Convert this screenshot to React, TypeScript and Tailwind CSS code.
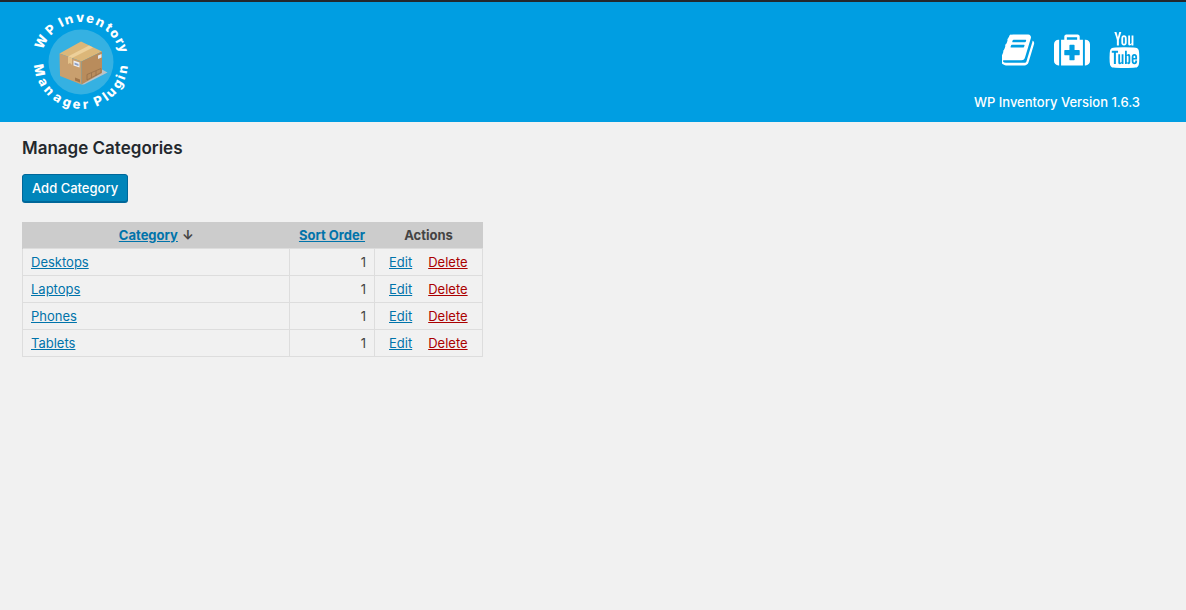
interface Category {
  name: string;
  sortOrder: number;
}

interface Glyph {
  char: string;
  angle: number;
}

const categories: Category[] = [
  { name: "Desktops", sortOrder: 1 },
  { name: "Laptops", sortOrder: 1 },
  { name: "Phones", sortOrder: 1 },
  { name: "Tablets", sortOrder: 1 },
];

// degrees clockwise from the top of the ring
const upperRing: Glyph[] = [
  { char: "W", angle: -63 },
  { char: "P", angle: -43 },
  { char: "I", angle: -27 },
  { char: "n", angle: -16 },
  { char: "v", angle: -1 },
  { char: "e", angle: 12 },
  { char: "n", angle: 26 },
  { char: "t", angle: 39 },
  { char: "o", angle: 50 },
  { char: "r", angle: 62 },
  { char: "y", angle: 72 },
];

// degrees clockwise from the bottom of the ring
const lowerRing: Glyph[] = [
  { char: "M", angle: 79 },
  { char: "a", angle: 62 },
  { char: "n", angle: 48 },
  { char: "a", angle: 33 },
  { char: "g", angle: 19 },
  { char: "e", angle: 6 },
  { char: "r", angle: -6 },
  { char: "P", angle: -24 },
  { char: "l", angle: -35 },
  { char: "u", angle: -45 },
  { char: "g", angle: -59 },
  { char: "i", angle: -69 },
  { char: "n", angle: -80 },
];

function Logo() {
  return (
    <svg
      viewBox="0 0 100 100"
      className="size-[100px] overflow-visible"
      role="img"
      aria-label="WP Inventory Manager Plugin"
    >
      <circle cx="50" cy="50" r="32.5" fill="#35b1e2" />
      <path d="M50 72.500L71 57.500 76.500 60.500 53 72.500z" fill="#b9c3c8" />
      <path d="M28.500 41.500L50 29.500 71 39.500 50.500 49.500z" fill="#dcb779" />
      <path d="M28.500 41.500L50.500 49.500V72.500L29 64z" fill="#c99f6e" />
      <path d="M50.500 49.500L71 39.500V61L50.500 72.500z" fill="#b98c5c" />
      <path d="M37 44.500L58 33.500 62 35.500 41 46z" fill="#edd09a" />
      <path d="M37 44.500L41 46V53L39 51 37 52z" fill="#e5c38b" />
      <path d="M42.500 48.500l6 2v5l-6-2z" fill="#eef0f4" />
      <path d="M43.500 50.500l4 1.500v2l-4-1.500z" fill="#8c9ec2" />
      <path d="M67 43.500l3.500-1.500v3.500l-3.500 1.500z" fill="#e4e7ed" />
      <path d="M44 65.500l5 2v3l-5-2z" fill="#a2764a" />
      <path
        d="M56 62.500l14-6v4l-14 7.500zM60.500 61v4.500M65 59v4.500"
        fill="none"
        stroke="#96704a"
        strokeWidth="0.8"
      />
      <g
        fill="#fff"
        fontFamily="Inter, sans-serif"
        fontSize="13"
        fontWeight="800"
        textAnchor="middle"
      >
        {upperRing.map(({ char, angle }, index) => (
          <text key={index} x="50" y="10" transform={`rotate(${angle} 50 50)`}>
            {char}
          </text>
        ))}
        {lowerRing.map(({ char, angle }, index) => (
          <text key={index} x="50" y="97" transform={`rotate(${angle} 50 50)`}>
            {char}
          </text>
        ))}
      </g>
    </svg>
  );
}

function BookIcon() {
  return (
    <svg viewBox="64 0 1664 1792" className="h-9 w-auto" fill="currentColor">
      <path d="M1639 478q40 57 18 129l-275 906q-19 64-76.500 107.500t-122.500 43.500h-923q-77 0-148.500-53.500t-99.500-131.500q-24-67-2-127 0-4 3-27t4-37q1-8-3-21.500t-3-19.500q2-11 8-21t16.500-23.500 16.500-23.500q23-38 45-91.500t30-91.500q3-10 .5-30t-.5-28q3-11 17-28t17-23q21-36 42-92t25-90q1-9-2.500-32t.5-28q4-13 22-30.500t22-22.500q19-26 42.500-84.500t27.500-96.500q1-8-3-25.500t-2-26.500q2-8 9-18t18-23 17-21q8-12 16.500-30.500t15-35 16-36 19.500-32 26.500-23.500 36-11.500 47.500 5.500l-1 3q38-9 51-9h761q74 0 114 56t18 130l-274 906q-36 119-71.500 153.500t-128.500 34.500h-869q-27 0-38 15-11 16-1 43 24 70 144 70h923q29 0 56-15.500t35-41.500l300-987q7-22 5-57 38 15 59 43zm-1064 2q-4 13 2 22.500t20 9.500h608q13 0 25.500-9.500t16.500-22.500l21-64q4-13-2-22.500t-20-9.500h-608q-13 0-25.500 9.500t-16.500 22.500zm-83 256q-4 13 2 22.500t20 9.500h608q13 0 25.500-9.500t16.500-22.500l21-64q4-13-2-22.500t-20-9.500h-608q-13 0-25.500 9.500t-16.500 22.500z" />
    </svg>
  );
}

function MedkitIcon() {
  return (
    <svg viewBox="0 0 1792 1792" className="h-9 w-auto" fill="currentColor">
      <path d="M1280 1120v-192q0-14-9-23t-23-9h-224v-224q0-14-9-23t-23-9h-192q-14 0-23 9t-9 23v224h-224q-14 0-23 9t-9 23v192q0 14 9 23t23 9h224v224q0 14 9 23t23 9h192q14 0 23-9t9-23v-224h224q14 0 23-9t9-23zm-640-736h512v-128h-512v128zm-384 0v1280h-32q-92 0-158-66t-66-158v-832q0-92 66-158t158-66h32zm1184 0v1280h-1088v-1280h160v-160q0-40 28-68t68-28h576q40 0 68 28t28 68v160h160zm352 224v832q0 92-66 158t-158 66h-32v-1280h32q92 0 158 66t66 158z" />
    </svg>
  );
}

function YoutubeIcon() {
  return (
    <svg viewBox="128 0 1536 1792" className="h-9 w-auto" fill="currentColor">
      <path d="M1099 1244v211q0 67-39 67-23 0-45-22v-301q22-22 45-22 39 0 39 67zm338 1v46h-90v-46q0-68 45-68t45 68zm-966-218h107v-94h-312v94h105v569h100v-569zm288 569h89v-494h-89v378q-30 42-57 42-18 0-21-21-1-3-1-35v-364h-89v391q0 49 8 73 12 37 58 37 48 0 102-61v54zm429-148v-197q0-73-9-99-17-56-71-56-50 0-93 54v-217h-89v663h89v-48q45 55 93 55 54 0 71-55 9-27 9-100zm338-10v-13h-91q0 51-2 61-7 36-40 36-46 0-46-69v-87h179v-103q0-79-27-116-39-51-106-51-68 0-107 51-28 37-28 116v173q0 79 29 116 39 51 108 51 72 0 108-53 18-27 21-54 2-9 2-58zm-608-913v-210q0-69-43-69t-43 69v210q0 70 43 70t43-70zm719 751q0 234-26 350-14 59-58 99t-102 46q-184 21-555 21t-555-21q-58-6-102.500-46t-57.500-99q-26-112-26-350 0-234 26-350 14-59 58-99t103-47q183-20 554-20t555 20q58 7 102.500 47t57.500 99q26 112 26 350zm-998-1276h102l-121 399v271h-100v-271q-14-74-61-212-37-103-65-187h106l71 263zm370 333v175q0 81-28 118-38 51-106 51-67 0-105-51-28-38-28-118v-175q0-80 28-117 38-51 105-51 68 0 106 51 28 37 28 117zm335-162v499h-91v-55q-53 62-103 62-46 0-59-37-8-24-8-75v-394h91v367q0 33 1 35 3 22 21 22 27 0 57-43v-381h91z" />
    </svg>
  );
}

function Header() {
  return (
    <header className="flex items-start justify-between border-t-2 border-[#23282d] bg-[#009ee2] py-[10px] pr-[46px] pl-[31px] text-white">
      <Logo />
      <div className="flex flex-col items-end gap-6 pt-5">
        <nav className="flex gap-[19px]">
          <a href="#docs" aria-label="Documentation">
            <BookIcon />
          </a>
          <a href="#support" aria-label="Support">
            <MedkitIcon />
          </a>
          <a href="#videos" aria-label="Videos">
            <YoutubeIcon />
          </a>
        </nav>
        <p className="text-[13px] leading-5 font-medium">
          WP Inventory Version 1.6.3
        </p>
      </div>
    </header>
  );
}

function CategoryTable() {
  return (
    <table className="mt-5 border-collapse text-[13px] leading-[18px]">
      <thead>
        <tr className="bg-[#ccc]">
          <th className="w-[267px] border-l border-[#ccc] px-2 py-1 font-bold">
            <a href="#category" className="mr-1 text-[#0073aa] underline">
              Category
            </a>
            ↓
          </th>
          <th className="w-[85px] px-2 py-1 font-bold">
            <a href="#sort-order" className="text-[#0073aa] underline">
              Sort Order
            </a>
          </th>
          <th className="w-[108px] px-2 py-1 font-bold">Actions</th>
        </tr>
      </thead>
      <tbody>
        {categories.map((category) => (
          <tr key={category.name}>
            <td className="border border-[#ddd] px-2 py-1">
              <a href="#edit" className="text-[#0073aa] underline">
                {category.name}
              </a>
            </td>
            <td className="border border-[#ddd] px-2 py-1 text-right">
              {category.sortOrder}
            </td>
            <td className="border border-[#ddd] px-[14px] py-1">
              <div className="flex gap-4">
                <a href="#edit" className="text-[#0073aa] underline">
                  Edit
                </a>
                <a href="#delete" className="text-[#a00] underline">
                  Delete
                </a>
              </div>
            </td>
          </tr>
        ))}
      </tbody>
    </table>
  );
}

export default function App() {
  return (
    <div className="min-h-screen bg-[#f1f1f1] font-[Inter,sans-serif] text-[#444]">
      <Header />
      <main className="px-[22px] pt-[14px] pb-10">
        <h2 className="text-[17px] leading-6 font-semibold text-[#23282d]">
          Manage Categories
        </h2>
        <button
          type="button"
          className="mt-[14px] block h-7 rounded-[3px] border border-[#006799] bg-[#0085ba] px-[9px] pt-px text-[13px] font-medium text-white shadow-[0_1px_0_#006799]"
        >
          Add Category
        </button>
        <CategoryTable />
      </main>
    </div>
  );
}
